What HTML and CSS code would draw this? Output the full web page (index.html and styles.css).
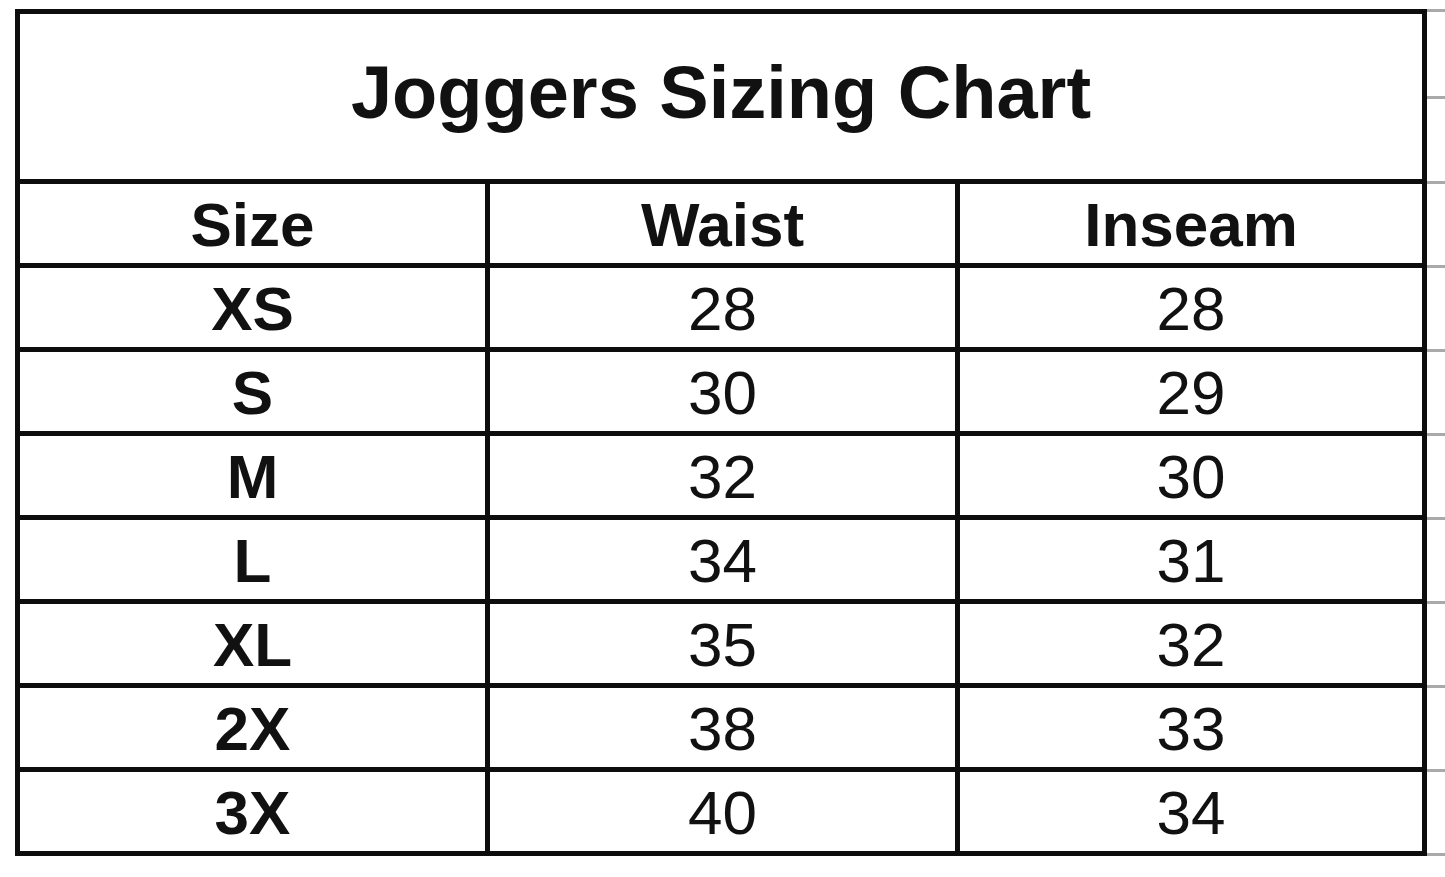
FILE: index.html
```html
<!DOCTYPE html>
<html lang="en">
<head>
<meta charset="utf-8">
<title>Joggers Sizing Chart</title>
<link rel="stylesheet" href="styles.css">
</head>
<body>
<div class="sheet">
  <div class="chart">
    <div class="title">Joggers Sizing Chart</div>
    <div class="row head">
      <div class="cell">Size</div>
      <div class="cell">Waist</div>
      <div class="cell">Inseam</div>
    </div>
    <div class="row"><div class="cell label">XS</div><div class="cell">28</div><div class="cell">28</div></div>
    <div class="row"><div class="cell label">S</div><div class="cell">30</div><div class="cell">29</div></div>
    <div class="row"><div class="cell label">M</div><div class="cell">32</div><div class="cell">30</div></div>
    <div class="row"><div class="cell label">L</div><div class="cell">34</div><div class="cell">31</div></div>
    <div class="row"><div class="cell label">XL</div><div class="cell">35</div><div class="cell">32</div></div>
    <div class="row"><div class="cell label">2X</div><div class="cell">38</div><div class="cell">33</div></div>
    <div class="row last"><div class="cell label">3X</div><div class="cell">40</div><div class="cell">34</div></div>
  </div>
  <div class="gutter">
    <div class="tick t1"></div>
    <div class="tick t2"></div>
    <div class="tick"></div>
    <div class="tick"></div>
    <div class="tick"></div>
    <div class="tick"></div>
    <div class="tick"></div>
    <div class="tick"></div>
    <div class="tick"></div>
    <div class="tick"></div>
    <div class="tick end"></div>
  </div>
</div>
</body>
</html>
```

FILE: styles.css
```css
html, body {
  margin: 0;
  padding: 0;
  background: #ffffff;
}

body {
  font-family: "Liberation Sans", Arial, sans-serif;
  color: #111111;
}

.sheet {
  display: flex;
  align-items: flex-start;
  padding-top: 9px;
  padding-left: 15px;
}

.chart {
  width: 1412px;
  box-sizing: border-box;
  border: 5px solid #0d0d0d;
  display: flex;
  flex-direction: column;
}

.title {
  box-sizing: border-box;
  height: 170px;
  padding-bottom: 8px;
  border-bottom: 5px solid #0d0d0d;
  display: flex;
  align-items: center;
  justify-content: center;
  font-weight: bold;
  font-size: 74px;
}

.row {
  display: grid;
  grid-template-columns: 465px 470px 1fr;
  height: 84px;
  box-sizing: border-box;
  border-bottom: 5px solid #0d0d0d;
}

.row.last {
  height: 79px;
  border-bottom: none;
}

.cell {
  display: flex;
  align-items: center;
  justify-content: center;
  font-size: 62px;
  padding-top: 2px;
}

.cell + .cell {
  border-left: 5px solid #0d0d0d;
}

.head .cell,
.cell.label {
  font-weight: bold;
}

.gutter {
  width: 18px;
  display: flex;
  flex-direction: column;
}

.tick {
  height: 84px;
  box-sizing: border-box;
  border-top: 3px solid #a9a9a9;
}

.tick.t1 {
  height: 87px;
}

.tick.t2 {
  height: 85px;
}

.tick.end {
  height: 3px;
}
```
